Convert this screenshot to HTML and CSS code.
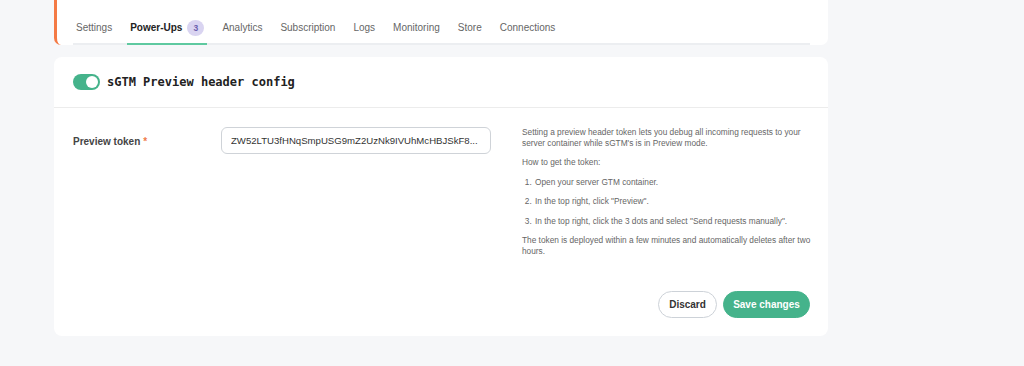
FILE: index.html
```html
<!DOCTYPE html>
<html lang="en">
<head>
<meta charset="utf-8">
<title>sGTM Preview header config</title>
<link rel="stylesheet" href="styles.css">
</head>
<body>
<div class="page">
  <div class="card tabs-card">
    <nav class="tabs">
      <a class="tab">Settings</a>
      <a class="tab active">Power-Ups <span class="badge">3</span></a>
      <a class="tab">Analytics</a>
      <a class="tab">Subscription</a>
      <a class="tab">Logs</a>
      <a class="tab">Monitoring</a>
      <a class="tab">Store</a>
      <a class="tab">Connections</a>
    </nav>
  </div>

  <div class="card config-card">
    <div class="config-header">
      <span class="toggle"><span class="knob"></span></span>
      <h2 class="config-title">sGTM Preview header config</h2>
    </div>
    <div class="config-body">
      <div class="field-row">
        <label class="field-label">Preview token <span class="req">*</span></label>
        <div class="field-input">
          <input class="text-input" type="text" value="ZW52LTU3fHNqSmpUSG9mZ2UzNk9IVUhMcHBJSkF8..." readonly>
        </div>
        <div class="help">
          <p>Setting a preview header token lets you debug all incoming requests to your server container while sGTM's is in Preview mode.</p>
          <p>How to get the token:</p>
          <ol>
            <li>Open your server GTM container.</li>
            <li>In the top right, click "Preview".</li>
            <li>In the top right, click the 3 dots and select "Send requests manually".</li>
          </ol>
          <p class="last">The token is deployed within a few minutes and automatically deletes after two hours.</p>
        </div>
      </div>
      <div class="actions">
        <button class="btn btn-outline">Discard</button>
        <button class="btn btn-primary">Save changes</button>
      </div>
    </div>
  </div>
</div>
</body>
</html>
```

FILE: styles.css
```css
* { box-sizing: border-box; }
html, body { margin: 0; padding: 0; }
body {
  background: #f6f7f9;
  font-family: "Liberation Sans", Arial, sans-serif;
  color: #333;
  height: 366px;
  overflow: hidden;
}
.page {
  width: 774px;
  margin-left: 54px;
  display: flex;
  flex-direction: column;
  gap: 12px;
}
.card {
  background: #fff;
  border-radius: 8px;
}
.tabs-card {
  border-radius: 0 0 7px 7px;
  border-left: 3px solid #f47a45;
  padding: 0 18px 0 16px;
  height: 45px;
}
.tabs {
  display: flex;
  gap: 12px;
  height: 45px;
  padding-top: 14px;
  border-bottom: 2px solid #eceef1;
}
.tab {
  display: flex;
  align-items: center;
  height: 31px;
  padding: 0 3px 2px;
  margin-bottom: -2px;
  font-size: 10px;
  color: #666;
  border-bottom: 2px solid transparent;
  white-space: nowrap;
}
.tab.active {
  color: #222;
  font-weight: bold;
  border-bottom-color: #5fc9a0;
}
.badge {
  display: inline-flex;
  align-items: center;
  justify-content: center;
  width: 17px;
  height: 16px;
  margin-left: 5px;
  border-radius: 50%;
  background: #d9d4f1;
  color: #6a5fae;
  font-size: 8.5px;
  font-weight: bold;
}
.config-card {
  height: 279px;
  display: flex;
  flex-direction: column;
}
.config-header {
  display: flex;
  align-items: center;
  gap: 7px;
  height: 51px;
  padding: 0 19px;
  border-bottom: 1px solid #ececec;
}
.toggle {
  width: 27px;
  height: 16px;
  border-radius: 8px;
  background: #45b38b;
  position: relative;
  flex: none;
}
.knob {
  position: absolute;
  right: 2px;
  top: 2px;
  width: 12px;
  height: 12px;
  border-radius: 50%;
  background: #fff;
}
.config-title {
  margin: 0;
  font-family: "DejaVu Sans Mono", "Liberation Mono", monospace;
  font-weight: bold;
  font-size: 12px;
  color: #222;
}
.config-body {
  flex: 1;
  display: flex;
  flex-direction: column;
  justify-content: space-between;
  padding: 19px 18px 18px 19px;
}
.field-row {
  display: flex;
  align-items: flex-start;
}
.field-label {
  width: 148px;
  flex: none;
  height: 29px;
  display: flex;
  align-items: center;
  font-size: 10px;
  font-weight: bold;
  color: #444;
}
.req { color: #f07a4a; margin-left: 3px; }
.field-input { width: 270px; flex: none; }
.text-input {
  width: 270px;
  height: 27px;
  border: 1px solid #cfd3d8;
  border-radius: 6px;
  padding: 0 9px;
  font-family: "Liberation Sans", Arial, sans-serif;
  font-size: 9.6px;
  color: #333;
  background: #fff;
  outline: none;
}
.help {
  flex: 1;
  margin-left: 31px;
  font-size: 8.3px;
  line-height: 10.5px;
  color: #666;
}
.help p { margin: 0 0 9px; }
.help p.last { margin: 0 -8px 0 0; }
.help ol {
  margin: 0 0 9px;
  padding-left: 12px;
}
.help li { margin-bottom: 9px; padding-left: 1px; }
.actions {
  display: flex;
  justify-content: flex-end;
  gap: 6px;
}
.btn {
  height: 27px;
  border-radius: 14px;
  font-family: "Liberation Sans", Arial, sans-serif;
  font-size: 10px;
  font-weight: bold;
  cursor: pointer;
}
.btn-outline {
  background: #fff;
  border: 1px solid #cdd2d8;
  color: #333;
  width: 59px;
  padding: 0;
}
.btn-primary {
  background: #45b38b;
  border: 1px solid #45b38b;
  color: #fff;
  width: 87px;
  padding: 0;
}
```
